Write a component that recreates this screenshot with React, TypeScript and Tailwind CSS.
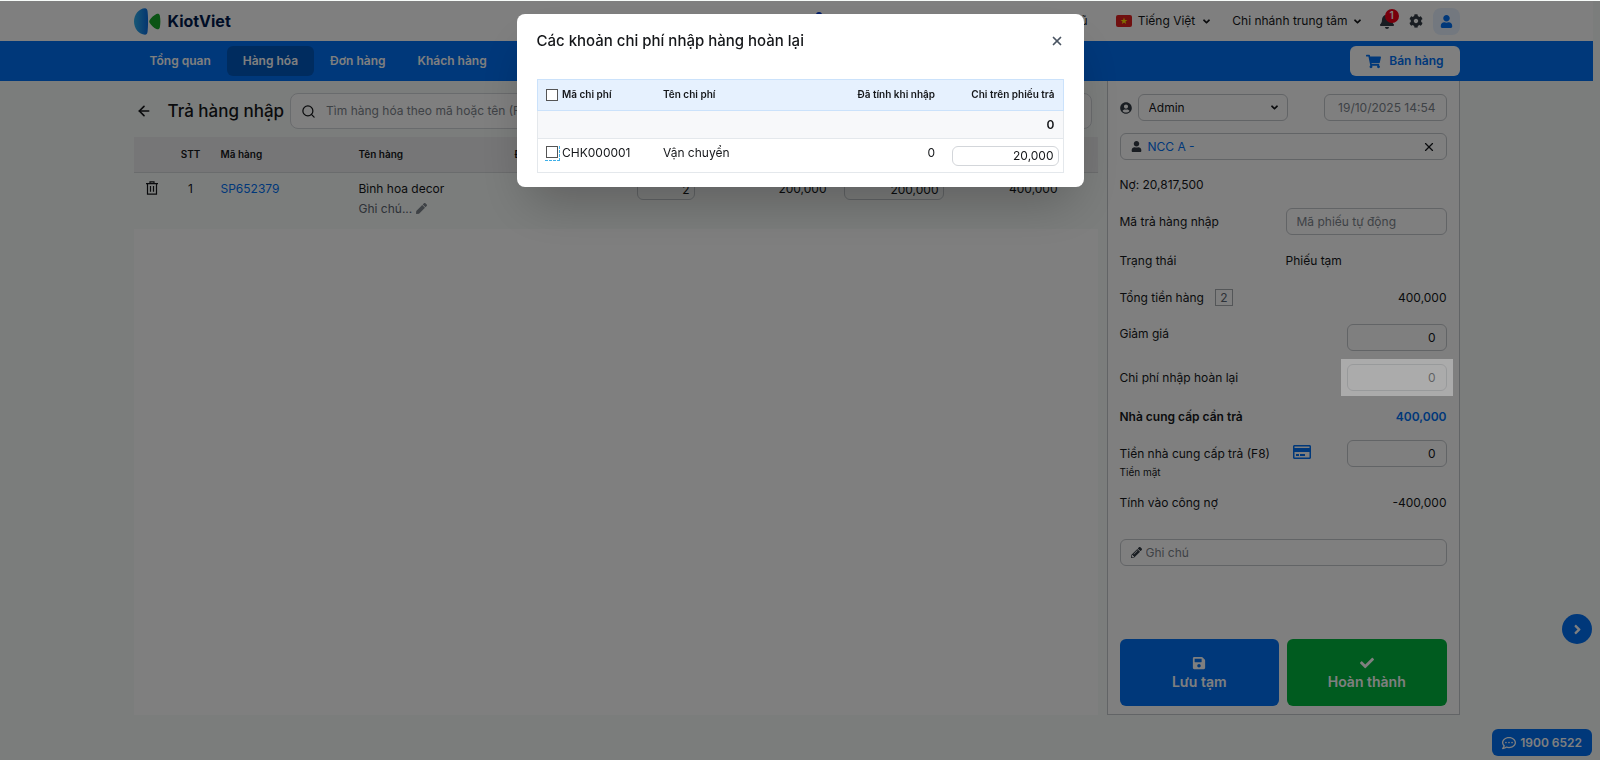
import { ReactNode } from "react";
import {
  FaAngleDown,
  FaAngleRight,
  FaBell,
  FaCheck,
  FaCog,
  FaPen,
  FaPencilAlt,
  FaRegCommentDots,
  FaRegCreditCard,
  FaSave,
  FaShoppingCart,
  FaUser,
  FaUserCircle,
} from "react-icons/fa";
import { ArrowLeft, Search, X } from "lucide-react";

const navItems = ["Tổng quan", "Hàng hóa", "Đơn hàng", "Khách hàng"];

const Logo = () => (
  <a href="#" className="flex items-center gap-[7px]">
    <svg width="27" height="27" viewBox="0 0 27 27">
      <defs>
        <linearGradient id="logoBlue" x1="0" y1="0" x2="1" y2="0">
          <stop offset="0" stopColor="#30b0ec" />
          <stop offset="1" stopColor="#0a6ce0" />
        </linearGradient>
      </defs>
      <path d="M11 .3c1.500 0 2.200 1 2.500 2.700.7 4 .8 17 0 21-.3 1.700-1 2.700-2.500 2.700C5 26.500 0 20.500 0 13.500S5 .5 11 .3z" fill="url(#logoBlue)" />
      <path d="M15.600 12.300c1.800-2.700 4.200-5 6.800-6.300 1.700-.8 3-.2 3.400 1.500.8 3.600.8 8.400 0 12-.4 1.700-1.700 2.300-3.400 1.500-2.600-1.300-5-3.600-6.800-6.300-.5-.8-.5-1.600 0-2.400z" fill="#16a82a" />
    </svg>
    <span className="text-base font-bold text-[#001a4d]">KiotViet</span>
  </a>
);

const TrashIcon = () => (
  <svg width="12" height="14" viewBox="0 0 12 14" fill="none" stroke="currentColor" strokeWidth="1.2">
    <path d="M0 2.600h12M4 2.400V.8h4v1.600M1.500 2.600v10.600h9V2.600M4.500 5v5.800M7.500 5v5.800" />
  </svg>
);

const Header = () => (
  <header className="bg-white">
    <div className="relative mx-auto flex h-10 max-w-[1326px] items-center justify-between">
      <Logo />
      <span className="absolute top-[11px] left-[682px] size-[6px] rounded-full bg-[#0037d0]"></span>
      <div className="flex items-center">
        <a href="#" className="mr-7">Dùng bản cũ</a>
        <button className="mr-5 flex items-center gap-1.5">
          <svg width="16" height="12" viewBox="0 0 16 12">
            <rect width="16" height="12" rx="2" fill="#e02020" />
            <path d="M8 2.500l.85 2.500h2.600L9.400 6.600l.8 2.500L8 7.600 5.800 9.100l.8-2.500L4.550 5h2.600z" fill="#ffe100" />
          </svg>
          Tiếng Việt
          <FaAngleDown className="size-[11px]" />
        </button>
        <button className="mr-4 flex items-center gap-1">
          Chi nhánh trung tâm
          <FaAngleDown className="size-[11px]" />
        </button>
        <button aria-label="Thông báo" className="relative mr-3.5 text-[#333b44]">
          <FaBell className="size-4" />
          <span className="absolute -top-1 left-1.5 flex size-[14px] items-center justify-center rounded-full bg-[#f00018] text-[10px] font-semibold text-white">1</span>
        </button>
        <button aria-label="Thiết lập" className="mr-2.5 text-[#333b44]">
          <FaCog className="size-[14px]" />
        </button>
        <button aria-label="Tài khoản" className="flex size-[27px] items-center justify-center rounded-lg bg-[#e6f1fe] text-[#0070f4]">
          <FaUser className="size-[13px]" />
        </button>
      </div>
    </div>
  </header>
);

const Nav = () => (
  <nav className="bg-[#0070f4]">
    <div className="mx-auto flex h-10 max-w-[1326px] items-center justify-between font-semibold">
      <div className="flex">
        {navItems.map((item) => (
          <a
            key={item}
            href="#"
            className={`flex h-[30px] items-center rounded-md px-4 text-white ${item === "Hàng hóa" ? "bg-[#0058bf]" : ""}`}
          >
            {item}
          </a>
        ))}
      </div>
      <button className="flex h-[30px] items-center gap-2 rounded-md bg-white px-4 text-[#0070f4]">
        <FaShoppingCart className="size-[15px]" />
        Bán hàng
      </button>
    </div>
  </nav>
);

const Products = () => (
  <section className="flex min-w-0 flex-1 flex-col">
    <div className="flex items-center pt-3 pb-2">
      <button aria-label="Quay lại" className="mr-4 ml-0.5">
        <ArrowLeft className="size-4" strokeWidth={2.5} />
      </button>
      <h1 className="mr-1.5 text-[17px] leading-6 font-medium">Trả hàng nhập</h1>
      <label className="mr-1.5 flex h-9 min-w-0 flex-1 items-center gap-2.5 rounded-lg border border-[#d3d6da] bg-white px-2.5">
        <Search className="size-[15px]" strokeWidth={2} />
        <input className="min-w-0 flex-1 outline-none placeholder:text-[#7d848c]" placeholder="Tìm hàng hóa theo mã hoặc tên (F3)" />
      </label>
    </div>
    <div className="flex-1 bg-white">
      <table className="w-full table-fixed">
        <colgroup>
          <col className="w-[37px]" />
          <col className="w-[40px]" />
          <col className="w-[138px]" />
          <col className="w-[156px]" />
          <col />
          <col className="w-[64px]" />
          <col className="w-[132px]" />
          <col className="w-[117px]" />
          <col className="w-[154px]" />
        </colgroup>
        <thead className="bg-[#ededee] text-[10px]">
          <tr className="h-[35px] border-b border-[#d5d8da] [&>th]:font-semibold">
            <th></th>
            <th>STT</th>
            <th className="pl-2.5 text-left">Mã hàng</th>
            <th className="pl-2.5 text-left">Tên hàng</th>
            <th className="pl-2.5 text-left">ĐVT</th>
            <th className="text-right">Số lượng</th>
            <th className="text-right">Giá nhập</th>
            <th className="text-right">Giá trả lại</th>
            <th className="pr-10 text-right">Thành tiền</th>
          </tr>
        </thead>
        <tbody className="bg-[#f7fbf9]">
          <tr className="h-[57px] align-top [&>td]:pt-1.5 [&>td]:leading-5">
            <td>
              <button aria-label="Xóa" className="mx-auto mt-0.5 block">
                <TrashIcon />
              </button>
            </td>
            <td className="text-center">1</td>
            <td className="pl-2.5"><a href="#" className="text-[#0070f4]">SP652379</a></td>
            <td className="pl-2.5">
              Bình hoa decor
              <button className="flex items-center gap-1 text-[#5b6470]">
                Ghi chú... <FaPen className="size-[11px] text-[#7d848c]" />
              </button>
            </td>
            <td></td>
            <td><input aria-label="Số lượng" defaultValue="2" className="mt-px ml-auto block h-5 w-[58px] rounded-md border border-[#c4c8cc] px-1 text-right" /></td>
            <td className="text-right">200,000</td>
            <td><input aria-label="Giá trả lại" defaultValue="200,000" className="mt-px ml-auto block h-5 w-[100px] rounded-md border border-[#c4c8cc] px-1 text-right" /></td>
            <td className="pr-10 text-right">400,000</td>
          </tr>
        </tbody>
      </table>
    </div>
  </section>
);

const field = "h-[27px] rounded-md border border-[#c4c8cc] bg-white px-2.5";

const Row = ({ label, children, className }: { label: ReactNode; children: ReactNode; className: string }) => (
  <div className={`flex items-start justify-between ${className}`}>
    <div>{label}</div>
    {children}
  </div>
);

const Summary = () => (
  <aside className="flex w-[353px] shrink-0 flex-col border border-t-0 border-[#c4c8cc] bg-white px-3 pt-[13px] pb-2 leading-5">
    <div className="flex items-center">
      <FaUserCircle className="mr-1.5 size-3 text-[#333b44]" />
      <div className="relative w-[150px]">
        <select aria-label="Người tạo" className={`w-full appearance-none ${field}`}>
          <option>Admin</option>
        </select>
        <FaAngleDown className="pointer-events-none absolute top-2 right-2 size-[11px]" />
      </div>
      <input aria-label="Thời gian" defaultValue="19/10/2025 14:54" className={`ml-auto w-[123px] text-right text-[#7d848c] ${field}`} />
    </div>
    <div className={`mt-3 flex items-center ${field}`}>
      <FaUser className="mr-1.5 size-[11px] text-[#333b44]" />
      <a href="#" className="text-[#0070f4]">NCC A -</a>
      <button aria-label="Bỏ chọn" className="ml-auto">
        <X className="size-[14px]" />
      </button>
    </div>
    <p className="mt-[15px]">Nợ: 20,817,500</p>
    <Row className="mt-[13px]" label={<label htmlFor="code" className="block pt-1">Mã trả hàng nhập</label>}>
      <input id="code" placeholder="Mã phiếu tự động" className={`w-[161px] placeholder:text-[#7d848c] ${field}`} />
    </Row>
    <Row className="mt-4" label="Trạng thái">
      <span className="w-[161px]">Phiếu tạm</span>
    </Row>
    <Row
      className="mt-[17px]"
      label={<>Tổng tiền hàng <span className="ml-2 border border-[#a9adb1] px-1 text-[#5b6470]">2</span></>}
    >
      <span>400,000</span>
    </Row>
    <Row className="mt-4" label={<label htmlFor="discount">Giảm giá</label>}>
      <input id="discount" defaultValue="0" className={`w-[100px] text-right ${field}`} />
    </Row>
    <Row className="mt-[13px]" label={<label htmlFor="refund" className="block pt-1">Chi phí nhập hoàn lại</label>}>
      <div className="relative">
        <input id="refund" defaultValue="0" className={`block w-[100px] text-right ${field}`} />
        <div className="pointer-events-none absolute -inset-x-1.5 -inset-y-[5px] z-20 bg-white/35"></div>
      </div>
    </Row>
    <Row className="mt-4 font-semibold" label="Nhà cung cấp cần trả">
      <span className="text-[#0070f4]">400,000</span>
    </Row>
    <Row
      className="mt-[13px]"
      label={<><label htmlFor="paid" className="block pt-1">Tiền nhà cung cấp trả (F8)</label><p className="text-[10px] leading-4">Tiền mặt</p></>}
    >
      <div className="flex items-start">
        <FaRegCreditCard className="mt-[3px] mr-9 size-[18px] text-[#0070f4]" />
        <input id="paid" defaultValue="0" className={`w-[100px] text-right ${field}`} />
      </div>
    </Row>
    <Row className="mt-[13px]" label="Tính vào công nợ">
      <span>-400,000</span>
    </Row>
    <label className={`mt-[26px] flex items-center gap-1 ${field}`}>
      <FaPencilAlt className="size-[11px] text-[#333b44]" />
      <input placeholder="Ghi chú" className="min-w-0 flex-1 outline-none placeholder:text-[#7d848c]" />
    </label>
    <div className="mt-auto flex gap-2 text-sm font-semibold text-white">
      <button className="flex h-[67px] flex-1 flex-col items-center justify-center gap-0.5 rounded-md bg-[#0070f4] pt-0.5">
        <FaSave className="size-[14px]" />
        Lưu tạm
      </button>
      <button className="flex h-[67px] flex-1 flex-col items-center justify-center gap-0.5 rounded-md bg-[#00b63e] pt-0.5">
        <FaCheck className="size-[14px]" />
        Hoàn thành
      </button>
    </div>
  </aside>
);

const CostDialog = () => (
  <div role="dialog" aria-labelledby="dialog-title" className="fixed inset-x-0 top-[14px] z-30 mx-auto w-[567px] rounded-lg bg-white px-5 pt-[13px] pb-[14px] shadow-2xl">
    <div className="mb-6 flex items-center justify-between">
      <h2 id="dialog-title" className="text-[15px] leading-7 font-medium">Các khoản chi phí nhập hàng hoàn lại</h2>
      <button aria-label="Đóng" className="text-[#4a5562]">
        <X className="size-[14px]" strokeWidth={3} />
      </button>
    </div>
    <table className="w-full table-fixed border border-[#e4e8ec]">
      <colgroup>
        <col className="w-[25px]" />
        <col className="w-[93px]" />
        <col />
        <col className="w-[130px]" />
        <col className="w-[128px]" />
      </colgroup>
      <thead className="text-[10px]">
        <tr className="h-[31px] border border-[#cbe2fb] bg-[#e6f1fe] [&>th]:font-semibold">
          <th className="pl-2 text-left"><input type="checkbox" aria-label="Chọn tất cả" className="block size-3 appearance-none border border-[#555] bg-white" /></th>
          <th className="text-left">Mã chi phí</th>
          <th className="pl-2 text-left">Tên chi phí</th>
          <th className="text-right">Đã tính khi nhập</th>
          <th className="pr-2 text-right">Chi trên phiếu trả</th>
        </tr>
      </thead>
      <tbody>
        <tr className="h-7 border-b border-[#e4e8ec] bg-[#f7f8fa]">
          <td colSpan={5} className="pr-2 text-right font-semibold">0</td>
        </tr>
        <tr className="h-[34px] align-top [&>td]:pt-1 [&>td]:leading-5">
          <td className="pl-[7px]">
            <div className="mt-[3px] size-[15px] border-r border-b border-dashed border-[#3fb0e8] pl-px">
              <input type="checkbox" id="chk1" className="block size-3 appearance-none border border-[#555] bg-white" />
            </div>
          </td>
          <td><label htmlFor="chk1">CHK000001</label></td>
          <td className="pl-2">Vận chuyển</td>
          <td className="text-right">0</td>
          <td className="pr-1"><input aria-label="Chi trên phiếu trả" defaultValue="20,000" className="mt-[3px] ml-auto block h-5 w-[107px] rounded-md border border-[#d3d6da] px-1 text-right" /></td>
        </tr>
      </tbody>
    </table>
  </div>
);

const App = () => {
  return (
    <div className="relative flex min-h-screen flex-col bg-[#f7fbf9] pt-px font-[Inter,sans-serif] text-xs text-[#15171a]">
      <div className="flex flex-1 flex-col pr-[7px]">
        <Header />
        <Nav />
        <main className="mx-auto flex w-full max-w-[1326px] flex-1 gap-[9px] pb-[45px]">
          <Products />
          <Summary />
        </main>
      </div>
      <button aria-label="Mở rộng" className="fixed right-2 bottom-[116px] flex size-[30px] items-center justify-center rounded-full bg-[#0070f4] text-white">
        <FaAngleRight className="size-[15px]" />
      </button>
      <a href="tel:19006522" className="fixed right-2 bottom-1 flex h-[27px] items-center gap-1 rounded-md bg-[#0070f4] px-2.5 font-semibold text-white">
        <FaRegCommentDots className="size-[14px]" />
        1900 6522
      </a>
      <div className="fixed inset-x-0 top-px bottom-0 z-10 bg-black/50"></div>
      <CostDialog />
    </div>
  );
};

export default App;
